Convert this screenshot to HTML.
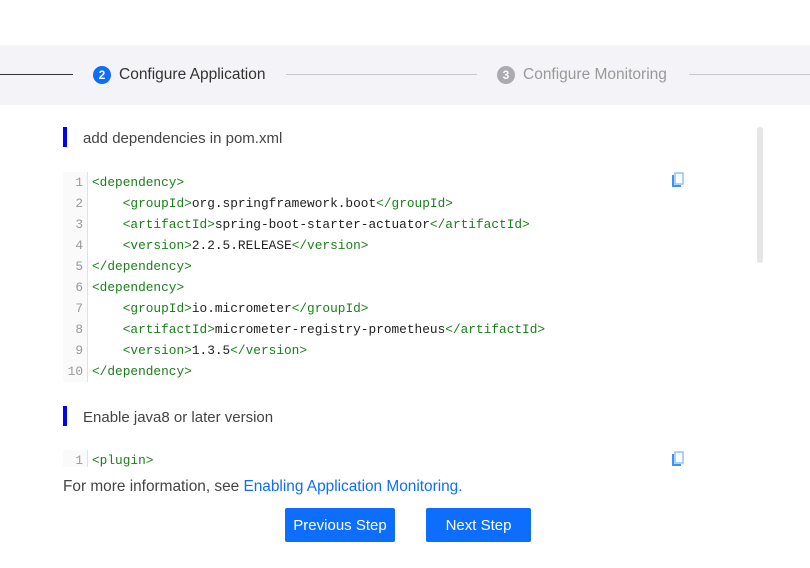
<!DOCTYPE html>
<html><head><style>
*{margin:0;padding:0;box-sizing:border-box}
body{width:810px;height:568px;background:#fff;font-family:"Liberation Sans",sans-serif;position:relative;overflow:hidden}
.steps{position:absolute;top:45px;left:0;width:810px;height:60px;background:#f4f4f8}
.ln{position:absolute;height:1px;top:29px}
.c{position:absolute;top:21px;width:18px;height:18px;border-radius:50%;color:#fff;font-size:12px;font-weight:bold;text-align:center;line-height:18px}
.st{position:absolute;top:21px;font-size:15.5px}
.bar{position:absolute;left:63px;width:4px;height:20px;background:#0000ff}
.h{position:absolute;left:83px;font-size:15px;color:#444}
.code{position:absolute;left:63px;width:620px;font-family:"Liberation Mono",monospace;font-size:12.8px;overflow:hidden}
.g{position:absolute;left:0;top:0;width:25px;background:#fafafa;border-right:1px solid #e2e2e2;color:#999;text-align:right;padding-right:4px}
.g div,.t div{height:21px;line-height:21px}
.t{position:absolute;left:29px;top:0;color:#222;white-space:pre}
.k{color:#1a7f1a}
.cp{position:absolute;left:671px}
.btn{position:absolute;top:508px;height:34px;background:#0d6efd;color:#fff;font-size:15px;text-align:center;line-height:36px;border-radius:2px}
</style></head><body>
<div class="steps">
<div class="ln" style="left:0;width:73px;background:#333"></div>
<div class="c" style="left:93px;background:#0d6efd">2</div>
<div class="st" style="left:119px;color:#333">Configure Application</div>
<div class="ln" style="left:286px;width:191px;background:#c8c8cc"></div>
<div class="c" style="left:497px;background:#aaaab0">3</div>
<div class="st" style="left:523px;color:#999">Configure Monitoring</div>
<div class="ln" style="left:689px;width:121px;background:#c8c8cc"></div>
</div>
<div style="position:absolute;left:757px;top:127px;width:6px;height:136px;background:#e6e6e6;border-radius:3px"></div>
<div class="bar" style="top:127px"></div><div class="h" style="top:130px">add dependencies in pom.xml</div>
<div class="code" style="top:172px;height:210px">
<div class="g"><div>1</div><div>2</div><div>3</div><div>4</div><div>5</div><div>6</div><div>7</div><div>8</div><div>9</div><div>10</div></div>
<div class="t"><div><span class="k">&lt;dependency&gt;</span></div><div>    <span class="k">&lt;groupId&gt;</span>org.springframework.boot<span class="k">&lt;/groupId&gt;</span></div><div>    <span class="k">&lt;artifactId&gt;</span>spring-boot-starter-actuator<span class="k">&lt;/artifactId&gt;</span></div><div>    <span class="k">&lt;version&gt;</span>2.2.5.RELEASE<span class="k">&lt;/version&gt;</span></div><div><span class="k">&lt;/dependency&gt;</span></div><div><span class="k">&lt;dependency&gt;</span></div><div>    <span class="k">&lt;groupId&gt;</span>io.micrometer<span class="k">&lt;/groupId&gt;</span></div><div>    <span class="k">&lt;artifactId&gt;</span>micrometer-registry-prometheus<span class="k">&lt;/artifactId&gt;</span></div><div>    <span class="k">&lt;version&gt;</span>1.3.5<span class="k">&lt;/version&gt;</span></div><div><span class="k">&lt;/dependency&gt;</span></div></div>
</div>
<svg class="cp" style="top:172px" width="14" height="16" viewBox="0 0 14 16"><rect x="4" y="1" width="8" height="11" fill="none" stroke="#8cc4fb" stroke-width="1.5"/><path d="M2 3v11h8" fill="none" stroke="#3d90f5" stroke-width="2"/></svg>
<div class="bar" style="top:406px"></div><div class="h" style="top:409px">Enable java8 or later version</div>
<div class="code" style="top:450px;height:17px">
<div class="g" style="height:17px"><div>1</div></div>
<div class="t"><div><span class="k">&lt;plugin&gt;</span></div></div>
</div>
<svg class="cp" style="top:451px" width="14" height="16" viewBox="0 0 14 16"><rect x="4" y="1" width="8" height="11" fill="none" stroke="#8cc4fb" stroke-width="1.5"/><path d="M2 3v11h8" fill="none" stroke="#3d90f5" stroke-width="2"/></svg>
<div style="position:absolute;left:63px;top:478px;font-size:15.4px;color:#444">For more information, see <span style="color:#0d6efd">Enabling Application Monitoring.</span></div>
<div class="btn" style="left:285px;width:110px">Previous Step</div>
<div class="btn" style="left:426px;width:105px">Next Step</div>
</body></html>
